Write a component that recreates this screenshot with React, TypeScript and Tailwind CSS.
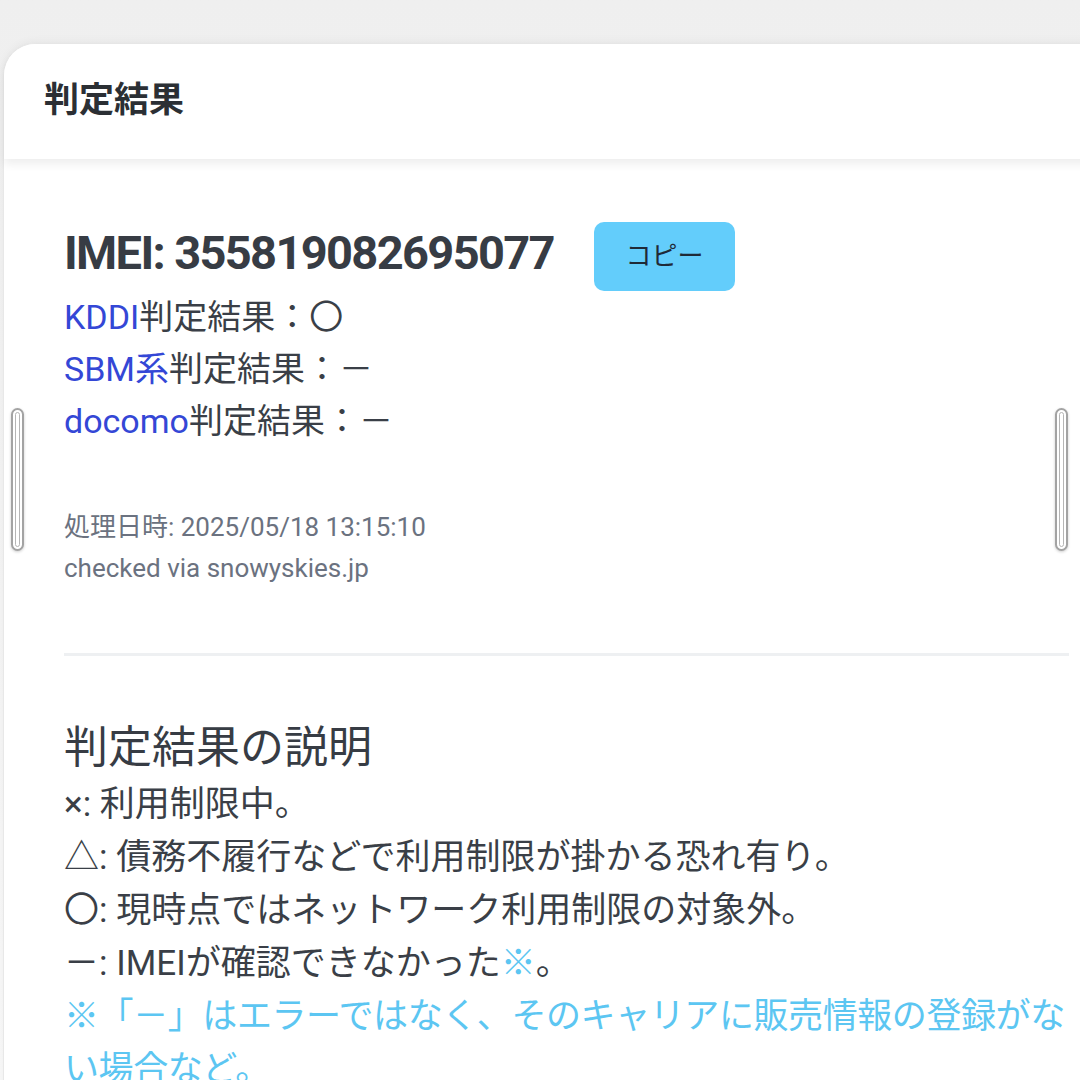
const results = [
    { carrier: 'KDDI', mark: '〇' },
    { carrier: 'SBM系', mark: '－' },
    { carrier: 'docomo', mark: '－' },
];

const legend = [
    '×: 利用制限中。',
    '△: 債務不履行などで利用制限が掛かる恐れ有り。',
    '〇: 現時点ではネットワーク利用制限の対象外。',
];

function ScrollHandle({ side }: { side: 'left' | 'right' }) {
    return (
        <div
            className={`absolute top-[408px] h-[143px] w-[13px] rounded-full border-[2px] border-[#a3a3a3] bg-white p-[2px] shadow-[0_1px_3px_rgba(0,0,0,0.2)] ${side === 'left' ? 'left-[11px]' : 'left-[1055px]'}`}
        >
            <div className="h-full w-full rounded-full border-[1.5px] border-[#b5b5b5] bg-white" />
        </div>
    );
}

export default function App() {
    return (
        <div
            className="relative h-[1080px] w-[1080px] overflow-hidden bg-gradient-to-b from-[#efefef] to-[#f8f8f8] pt-[43px] pl-[3px]"
            style={{ fontFamily: 'Roboto, "Noto Sans CJK JP", sans-serif' }}
        >
            {/* Card */}
            <div className="h-[1100px] w-[1110px] rounded-tl-[32px] border border-[#e8e8e8] bg-white shadow-[0_-2px_8px_rgba(0,0,0,0.04)]">
                {/* Header */}
                <div className="relative z-10 flex h-[115px] items-center rounded-tl-[32px] bg-white pl-[40px] shadow-[0_5px_10px_rgba(0,0,0,0.07)]">
                    <h1 className="text-[35px] font-bold text-[#2b2f34]">判定結果</h1>
                </div>

                {/* Body */}
                <div className="w-[1065px] pt-[63px] pl-[60px]">
                    <div className="flex items-center">
                        <p className="-mt-[8px] text-[47px] font-bold leading-none tracking-[-0.035em] text-[#373c44]">
                            IMEI: 355819082695077
                        </p>
                        <button className="ml-[40px] h-[69px] w-[141px] rounded-[10px] bg-[#63cdfb] text-[26px] text-[#1f2a37]">
                            コピー
                        </button>
                    </div>

                    <div className="text-[34px] leading-[52px] text-[#3a3f47]">
                        {results.map((r) => (
                            <p key={r.carrier}>
                                <span className="text-[#3447d6]">{r.carrier}</span>
                                判定結果：{r.mark}
                            </p>
                        ))}
                    </div>

                    <div className="mt-[60px] text-[26px] leading-[41px] text-[#6b7280]">
                        <p>処理日時: 2025/05/18 13:15:10</p>
                        <p>checked via snowyskies.jp</p>
                    </div>

                    <div className="mt-[64px] h-[3px] w-[1005px] bg-[#eef0f2]" />

                    <h2 className="mt-[62px] text-[44px] leading-[60px] text-[#373c44]">判定結果の説明</h2>

                    <div className="w-[1010px] text-[35px] leading-[53px] text-[#3a3f47]">
                        {legend.map((line) => (
                            <p key={line}>{line}</p>
                        ))}
                        <p>
                            －: IMEIが確認できなかった<span className="text-[#5cc6f2]">※</span>。
                        </p>
                        <p className="tracking-[-0.012em] text-[#5cc6f2]">
                            ※「－」はエラーではなく、そのキャリアに販売情報の登録がない場合など。
                        </p>
                    </div>
                </div>
            </div>

            <ScrollHandle side="left" />
            <ScrollHandle side="right" />
        </div>
    );
}
